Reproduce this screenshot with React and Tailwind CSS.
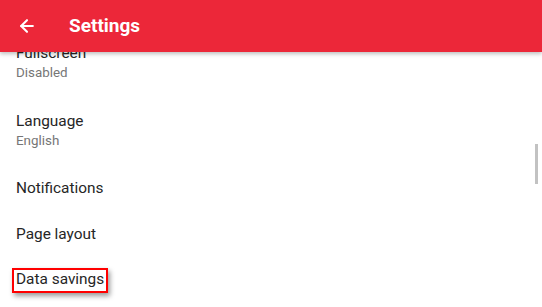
import { ArrowLeft } from 'lucide-react'

function TwoLine({ title, sub }) {
  return (
    <div className="h-[68px] px-4 pt-[14px]">
      <div className="text-[15.4px] leading-5 text-[#262626]">{title}</div>
      <div className="text-[13.4px] leading-5 text-[#767676]">{sub}</div>
    </div>
  )
}

function OneLine({ children }) {
  return (
    <div className="h-[46px] px-4 flex items-center text-[15.4px] leading-5 text-[#262626]">
      {children}
    </div>
  )
}

export default function App() {
  return (
    <div className="relative w-[542px] h-[307px] overflow-hidden bg-white" style={{ fontFamily: 'Roboto, "Noto Sans", sans-serif' }}>
      {/* list scrolled a bit, first item sits under the toolbar */}
      <div className="pt-[29px]">
        <TwoLine title="Fullscreen" sub="Disabled" />
        <TwoLine title="Language" sub="English" />
        <OneLine>Notifications</OneLine>
        <OneLine>Page layout</OneLine>
        <div className="h-[46px] pl-3 flex items-center">
          <span className="border-2 border-[#ff0000] pl-[2px] pr-[2px] h-[25px] flex items-center text-[15.4px] text-[#262626] shadow-[2px_3px_5px_rgba(0,0,0,0.4)]">
            Data savings
          </span>
        </div>
      </div>

      {/* scrollbar */}
      <div className="absolute right-[4px] top-[144px] w-[3px] h-[40px] bg-[#c2c2c2]" />

      {/* toolbar */}
      <div className="absolute top-0 left-0 right-0 h-[52px] bg-[#ec2739] flex items-center shadow-[0_2px_4px_rgba(0,0,0,0.25)]">
        <ArrowLeft className="ml-[17px] w-5 h-5 text-white" strokeWidth={2.5} />
        <span className="ml-[32px] text-white text-[19px] font-bold">Settings</span>
      </div>
    </div>
  )
}
